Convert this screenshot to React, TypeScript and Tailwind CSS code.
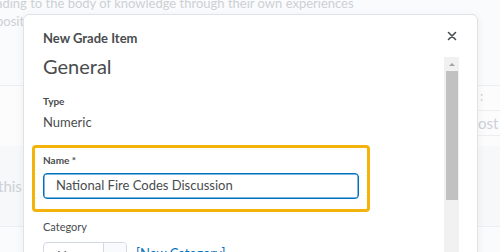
import React from 'react';

const font = { fontFamily: 'Lato, "Open Sans", sans-serif' };

const BackgroundPage: React.FC = () => (
  <div className="h-[252px] w-[500px] overflow-hidden bg-[#fafbfc] text-[#cdd0d4]">
    <div className="-mt-[6px] -ml-[4px] text-[13px] leading-[18px]">
      <div>ading to the body of knowledge through their own experiences</div>
      <div>positions and competencies</div>
    </div>
    <div className="mt-[55px] border-t border-[#eceef1]" />
    <div className="flex h-[60px] justify-between bg-[#fcfcfd]">
      <div />
      <div className="flex w-[22px] flex-col">
        <div className="h-[25px] border-b border-[#eceef1] pt-[1px] pl-[2px] text-[13px]">:</div>
        <div className="h-[25px] border-b border-[#eceef1] pt-[1px] text-[15px] whitespace-nowrap">ost R</div>
      </div>
    </div>
    <div className="flex h-[80px] items-center bg-[#f7f8fa] text-[15px]">
      <span className="-ml-[2px]">this t</span>
    </div>
    <div className="border-t border-[#eceef1]" />
  </div>
);

const CloseIcon: React.FC = () => (
  <svg width="10" height="10" viewBox="0 0 10 10" className="text-[#494c4e]">
    <path d="M1.5 1.5 L8.5 8.5 M8.5 1.5 L1.5 8.5" stroke="currentColor" strokeWidth="1.6" strokeLinecap="round" />
  </svg>
);

const Scrollbar: React.FC = () => (
  <div className="flex w-[15px] flex-col bg-[#f1f1f1]">
    <div className="flex h-[14px] items-center justify-center">
      <div className="h-0 w-0 border-x-[3px] border-b-[3px] border-x-transparent border-b-[#a3a3a3]" />
    </div>
    <div className="mx-auto h-[129px] w-[12px] bg-[#c1c1c1]" />
  </div>
);

export default function App() {
  return (
    <div className="relative h-[252px] w-[500px] overflow-hidden" style={font}>
      <BackgroundPage />

      <div className="absolute left-[23px] top-[14px] flex h-[270px] w-[455px] flex-col rounded-[6px] border border-[#dfe2e6] bg-white shadow-[0_2px_10px_rgba(0,0,0,0.06)]">
        <div className="flex h-[42px] items-start justify-between pl-[19px] pr-[19px] pt-[15px]">
          <h2 className="text-[13px] font-bold leading-[16px] text-[#494c4e]">New Grade Item</h2>
          <div className="mt-[1px] mr-[1px]">
            <CloseIcon />
          </div>
        </div>

        <div className="flex flex-1 pr-[18px]">
          <div className="flex-1 pl-[19px] text-[#494c4e]">
            <div className="-mt-[1px] text-[20px] leading-[20px]">General</div>

            <div className="mt-[19px] text-[10px] font-bold leading-[12px]">Type</div>
            <div className="mt-[7px] text-[13px] leading-[16px]">Numeric</div>

            <div className="mt-[15px] -ml-[11px] w-[338px] rounded-[4px] border-[3px] border-[#f3b30b] px-[8px] pt-[6px] pb-[10px]">
              <div className="text-[10px] font-bold leading-[12px]">Name *</div>
              <div className="mt-[7px] flex h-[26px] w-full items-center rounded-[4px] border border-[#006fbf] pl-[12px] text-[13px] shadow-[inset_0_0_0_0.5px_#006fbf]">
                National Fire Codes Discussion
              </div>
            </div>

            <div className="mt-[8px] text-[11px] leading-[14px]">Category</div>
            <div className="mt-[8px] flex items-start gap-[9px]">
              <div className="flex h-[30px] w-[84px] overflow-hidden rounded-[4px] border border-[#d3d9e3]">
                <div className="flex w-[59px] items-center pl-[13px] text-[13px]">None</div>
                <div className="flex-1 border-l border-[#d3d9e3] bg-[#f9fafb]" />
              </div>
              <span className="mt-[3px] text-[13px] leading-[16px] text-[#006fbf]">[New Category]</span>
            </div>
          </div>
          <Scrollbar />
        </div>
      </div>
    </div>
  );
}
